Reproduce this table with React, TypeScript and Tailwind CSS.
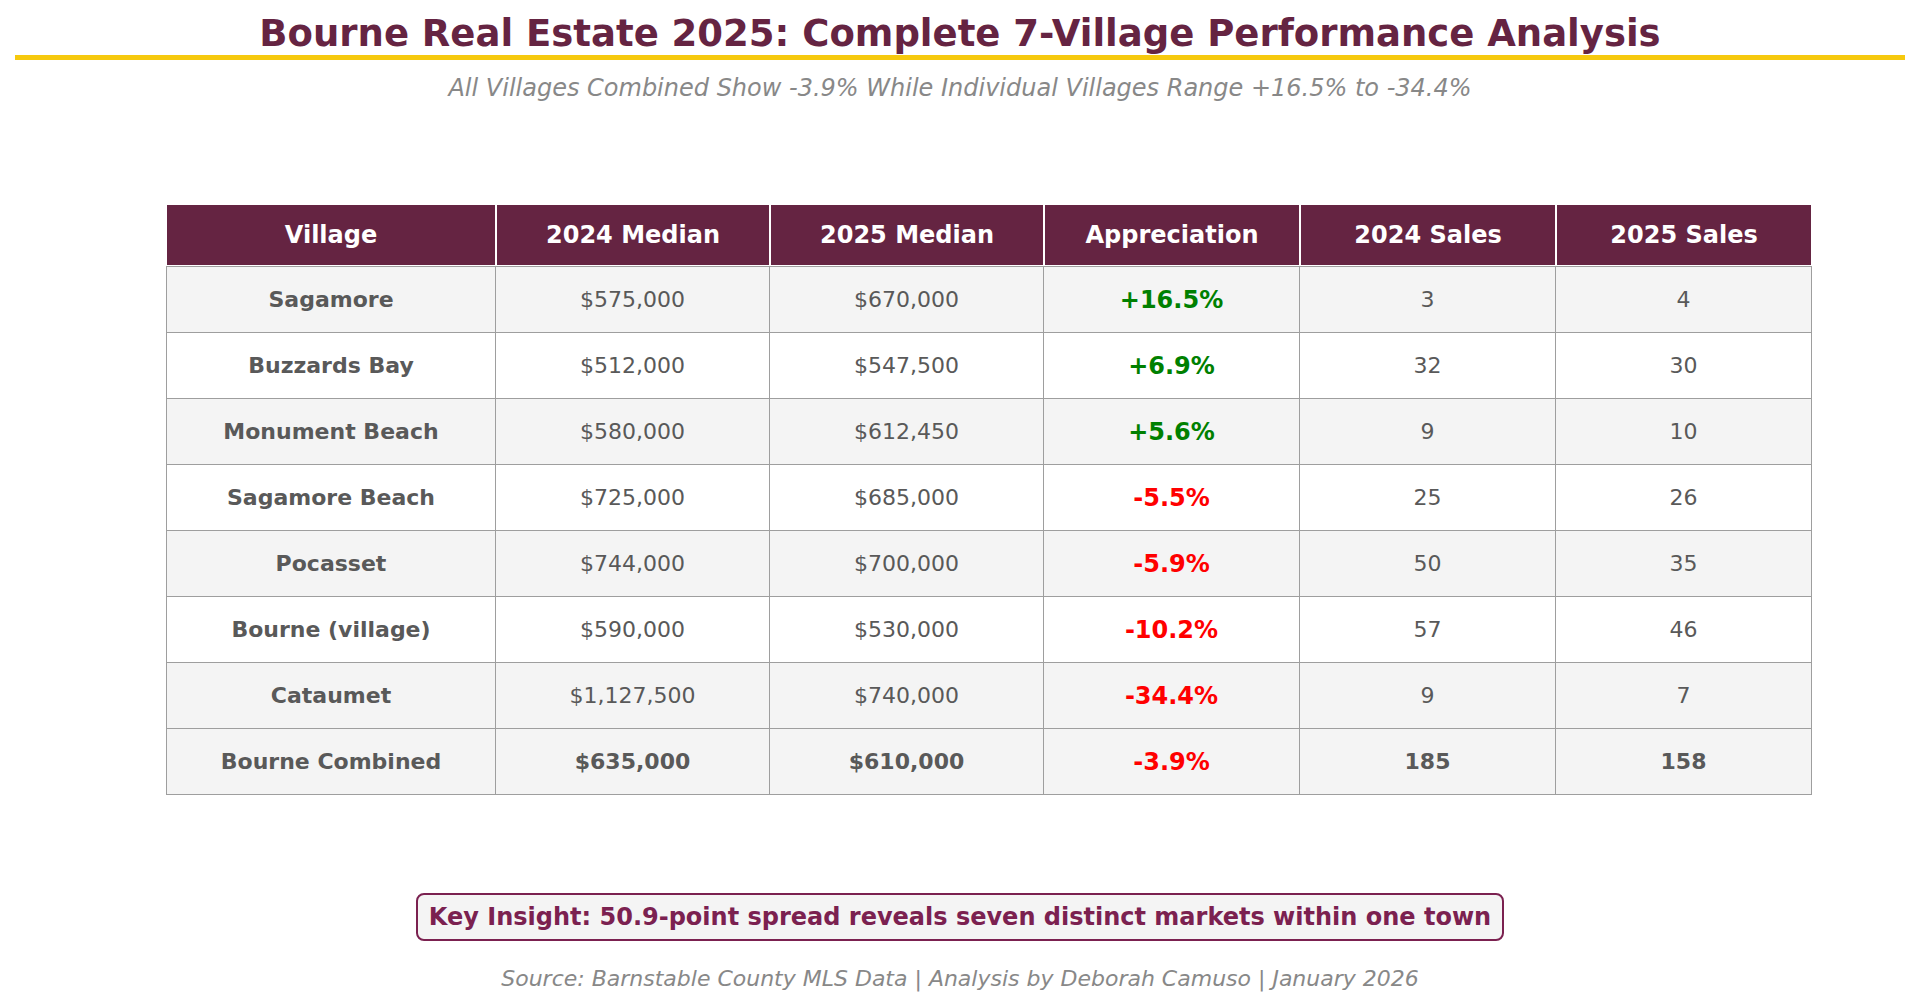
import React from 'react';

const columns = [
    { title: "Village", width: "w-[330px]" },
    { title: "2024 Median", width: "w-[274px]" },
    { title: "2025 Median", width: "w-[274px]" },
    { title: "Appreciation", width: "w-[256px]" },
    { title: "2024 Sales", width: "w-[256px]" },
    { title: "2025 Sales", width: "w-[256px]" },
];

const rows = [
    { village: "Sagamore", m24: "$575,000", m25: "$670,000", change: "+16.5%", s24: "3", s25: "4" },
    { village: "Buzzards Bay", m24: "$512,000", m25: "$547,500", change: "+6.9%", s24: "32", s25: "30" },
    { village: "Monument Beach", m24: "$580,000", m25: "$612,450", change: "+5.6%", s24: "9", s25: "10" },
    { village: "Sagamore Beach", m24: "$725,000", m25: "$685,000", change: "-5.5%", s24: "25", s25: "26" },
    { village: "Pocasset", m24: "$744,000", m25: "$700,000", change: "-5.9%", s24: "50", s25: "35" },
    { village: "Bourne (village)", m24: "$590,000", m25: "$530,000", change: "-10.2%", s24: "57", s25: "46" },
    { village: "Cataumet", m24: "$1,127,500", m25: "$740,000", change: "-34.4%", s24: "9", s25: "7" },
    { village: "Bourne Combined", m24: "$635,000", m25: "$610,000", change: "-3.9%", s24: "185", s25: "158", total: true },
];

const App = () => {
    return (
        <div className="w-[1920px] h-[1005px] bg-white font-['DejaVu_Sans',sans-serif] flex flex-col">
            <h1 className="pt-[12px] text-center text-[37px] leading-[43px] font-bold text-[#652442]">
                Bourne Real Estate 2025: Complete 7-Village Performance Analysis
            </h1>
            <div className="mx-[15px] h-[5px] bg-[#f6c90e]"></div>
            <p className="mt-[13px] text-center text-[24px] leading-[30px] italic text-[#888888]">
                All Villages Combined Show -3.9% While Individual Villages Range +16.5% to -34.4%
            </p>

            {/* table */}
            <div className="mt-[101px] ml-[166px] w-fit flex flex-col">
                <div className="flex h-[62px]">
                    {columns.map((col, index) => (
                        <div key={index}
                             className={`${col.width} border-[1.5px] border-white bg-[#652442] flex items-center justify-center text-[24px] font-bold text-white`}>
                            {col.title}
                        </div>
                    ))}
                </div>
                <div className="flex flex-col border-t border-l border-[#9e9e9e]">
                    {rows.map((row, index) => {
                        const bg = index % 2 === 0 || row.total ? "bg-[#f4f4f4]" : "bg-white";
                        const weight = row.total ? "font-bold" : "font-normal";
                        const positive = row.change.startsWith("+");
                        const cells = [row.village, row.m24, row.m25, row.change, row.s24, row.s25];
                        return (
                            <div key={index} className={`flex h-[66px] ${bg}`}>
                                {cells.map((cell, i) => {
                                    let cls = `text-[22px] text-[#595959] ${weight}`;
                                    if (i === 0) cls = "text-[22px] text-[#595959] font-bold";
                                    if (i === 3) cls = `text-[24px] font-bold ${positive ? "text-[#008000]" : "text-[#ff0000]"}`;
                                    return (
                                        <div key={i}
                                             className={`${i === 0 ? "w-[329px]" : columns[i].width} border-r border-b border-[#9e9e9e] flex items-center justify-center ${cls}`}>
                                            {cell}
                                        </div>
                                    );
                                })}
                            </div>
                        );
                    })}
                </div>
            </div>

            <div className="mt-[98px] mx-auto h-[48px] px-[11px] flex items-center rounded-[8px] border-2 border-[#7b2150] bg-[#f4f4f4] text-[24px] font-bold text-[#7b2150]">
                Key Insight: 50.9-point spread reveals seven distinct markets within one town
            </div>
            <p className="mt-[23px] text-center text-[22px] leading-[30px] italic text-[#888888]">
                Source: Barnstable County MLS Data | Analysis by Deborah Camuso | January 2026
            </p>
        </div>
    );
};

export default App;
